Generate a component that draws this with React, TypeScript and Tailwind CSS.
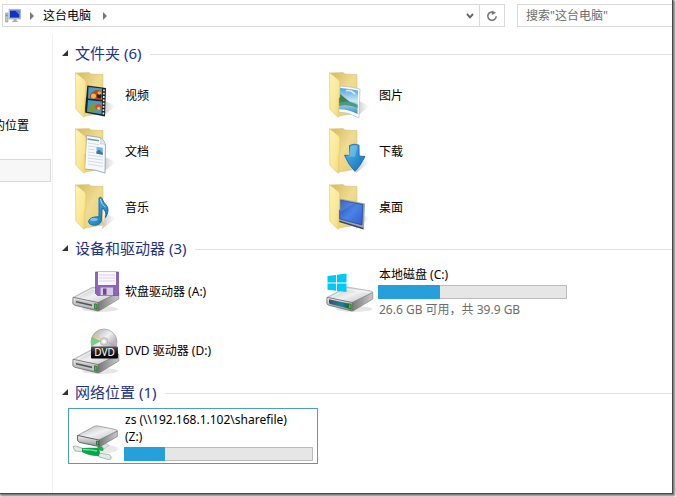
import React from 'react';

type IconName =
  | 'videos'
  | 'pictures'
  | 'documents'
  | 'downloads'
  | 'music'
  | 'desktop'
  | 'floppy'
  | 'system'
  | 'dvd'
  | 'network';

interface Entry {
  name: string;
  icon: IconName;
  used?: number;
  detail?: string;
  selected?: boolean;
}

interface GroupProps {
  title: string;
  entries: Entry[];
  rowClass: string;
  className?: string;
}

const folders: Entry[] = [
  { name: '视频', icon: 'videos' },
  { name: '图片', icon: 'pictures' },
  { name: '文档', icon: 'documents' },
  { name: '下载', icon: 'downloads' },
  { name: '音乐', icon: 'music' },
  { name: '桌面', icon: 'desktop' },
];

const drives: Entry[] = [
  { name: '软盘驱动器 (A:)', icon: 'floppy' },
  { name: '本地磁盘 (C:)', icon: 'system', used: 33, detail: '26.6 GB 可用，共 39.9 GB' },
  { name: 'DVD 驱动器 (D:)', icon: 'dvd' },
];

const network: Entry[] = [
  { name: 'zs (\\\\192.168.1.102\\sharefile) (Z:)', icon: 'network', used: 22, selected: true },
];

// Gradients shared by every icon on the page
const IconDefs = () => (
  <svg className="absolute size-0" aria-hidden="true">
    <defs>
      <linearGradient id="flap" x1="0" y1="0" x2="1" y2="1">
        <stop offset="0" stopColor="#fdf3b4" />
        <stop offset="0.6" stopColor="#fae896" />
        <stop offset="1" stopColor="#f3d468" />
      </linearGradient>
      <linearGradient id="back" x1="0" y1="0" x2="1" y2="1">
        <stop offset="0" stopColor="#d3b962" />
        <stop offset="0.5" stopColor="#efdb92" />
        <stop offset="1" stopColor="#e6cb72" />
      </linearGradient>
      <linearGradient id="shade" x1="0" y1="0" x2="1" y2="0">
        <stop offset="0" stopColor="#888" stopOpacity="0.5" />
        <stop offset="1" stopColor="#aaa" stopOpacity="0" />
      </linearGradient>
      <linearGradient id="blue" x1="0" y1="0" x2="1" y2="1">
        <stop offset="0" stopColor="#56bdf0" />
        <stop offset="1" stopColor="#0c6bb8" />
      </linearGradient>
      <linearGradient id="screen" x1="0" y1="0" x2="1" y2="1">
        <stop offset="0" stopColor="#1f49b4" />
        <stop offset="0.5" stopColor="#4a83e6" />
        <stop offset="1" stopColor="#2c5fd2" />
      </linearGradient>
      <linearGradient id="sky" x1="0" y1="0" x2="0" y2="1">
        <stop offset="0" stopColor="#4aa3dd" />
        <stop offset="0.5" stopColor="#c8e8f5" />
        <stop offset="1" stopColor="#2e8fb8" />
      </linearGradient>
      <linearGradient id="metal" x1="0" y1="0" x2="1" y2="1">
        <stop offset="0" stopColor="#b5b5b7" />
        <stop offset="0.5" stopColor="#f0f0f1" />
        <stop offset="1" stopColor="#b9b9bc" />
      </linearGradient>
      <linearGradient id="side" x1="0" y1="0" x2="1" y2="0">
        <stop offset="0" stopColor="#77777a" />
        <stop offset="1" stopColor="#c9c9cb" />
      </linearGradient>
      <linearGradient id="front" x1="0" y1="0" x2="0" y2="1">
        <stop offset="0" stopColor="#f4f4f5" />
        <stop offset="1" stopColor="#8d8d90" />
      </linearGradient>
      <linearGradient id="glow" x1="0" y1="0" x2="1" y2="0">
        <stop offset="0" stopColor="#38506a" />
        <stop offset="0.6" stopColor="#1a8299" />
        <stop offset="1" stopColor="#1b5b48" />
      </linearGradient>
      <linearGradient id="disc" x1="0" y1="0" x2="1" y2="1">
        <stop offset="0" stopColor="#9f9fa3" />
        <stop offset="0.45" stopColor="#f1f1f3" />
        <stop offset="0.7" stopColor="#b4b4b8" />
        <stop offset="1" stopColor="#dedee0" />
      </linearGradient>
      <linearGradient id="label" x1="0" y1="0" x2="0" y2="1">
        <stop offset="0" stopColor="#555" />
        <stop offset="0.5" stopColor="#1a1a1a" />
        <stop offset="1" stopColor="#000" />
      </linearGradient>
    </defs>
  </svg>
);

const Folder = ({ children }: { children: React.ReactNode }) => (
  <>
    <path d="M30 46 L44 35 L33 30 Z" fill="url(#shade)" />
    <path d="M4 2 L17 1.5 L19 3 L31 3.5 V42 L13 45 Z" fill="url(#back)" stroke="#dcc47a" strokeWidth="0.6" />
    {children}
    <path d="M3.5 1.5 L12.8 9 Q13.8 10 13.8 11 V26 L12.8 27.5 V45.5 Q12.5 46.8 11 45.6 L3.8 38 Z" fill="url(#flap)" stroke="#dfc468" strokeWidth="0.6" />
  </>
);

const DriveBody = ({ slot = '#55555a', lit = false }: { slot?: string; lit?: boolean }) => (
  <>
    <ellipse cx="28" cy="41" rx="18" ry="3" fill="#999" opacity="0.25" />
    <path d="M1 29.5 L19 20 Q20.5 19 22.5 19.3 L45 23 Q47 23.5 46.5 25 L26 35 Z" fill="url(#metal)" stroke="#9b9b9e" strokeWidth="0.6" />
    <path d="M26 34.5 L46.8 24.5 V31 L27 43 Q26 43.4 26 42 Z" fill="url(#side)" stroke="#77777a" strokeWidth="0.6" />
    <path d="M1 29.3 L26 34.5 V43 L3 37.3 Q0.8 36.6 0.8 35 Z" fill="url(#front)" stroke="#68686b" strokeWidth="0.8" />
    <path d="M3 31.3 L23.5 35.7 V40.7 L4 36 Q3 35.6 3 34.6 Z" fill={lit ? 'url(#glow)' : '#c5c5c8'} />
    {!lit && <path d="M4 33 L20 36.5 V38.2 L4 34.6 Z" fill={slot} />}
    <path d="M22.6 35.8 L25 36.3 V41.2 L22.6 40.6 Z" fill="#3fc63c" stroke="#23652a" strokeWidth="0.8" />
    <path d="M6 28.7 L20.5 21 L43 24.6" fill="none" stroke="#fff" strokeWidth="0.8" opacity="0.8" />
  </>
);

const drawings: Record<IconName, React.ReactNode> = {
  videos: (
    <Folder>
      <path d="M15.3 14.5 L34 17 L33 45.5 L12.5 41.5 Z" fill="#1d2224" />
      <path d="M16.5 16 L30 17.6 V28.8 L16 27.5 Z" fill="#469ec5" />
      <path d="M16 29 L30 30.5 L29.5 43.3 L15 40.7 Z" fill="#459bc0" />
      <path d="M18 24 Q23 17 29 20 V28.5 L18 27 Z" fill="#b9442a" />
      <circle cx="21.5" cy="25" r="2.5" fill="#edbd38" />
      <circle cx="27.3" cy="25" r="2.4" fill="#18252f" />
      <circle cx="27.3" cy="22" r="1.8" fill="#e9b52f" />
      <path d="M17 38 Q19 31 23 33 L25 41.5 L16 40.5 Z" fill="#7a9742" />
      <circle cx="26.5" cy="36" r="3.1" fill="#d44834" />
      <circle cx="26.7" cy="37.3" r="1.6" fill="#f1cd43" />
      <path d="M32 18.5 L31.3 44.5" stroke="#e8eeee" strokeWidth="1.6" strokeDasharray="1.8 1.5" />
    </Folder>
  ),
  pictures: (
    <Folder>
      <path d="M14 15 Q24 15.5 34 18 L33 47 Q23 41 12.5 41 Z" fill="#fafafa" stroke="#b9bec3" strokeWidth="0.7" />
      <path d="M14 17 Q24 17.5 32 19.5 L31.5 43 Q23 38.5 13 38.3 Z" fill="url(#sky)" />
      <path d="M13 22 L19 27 L24 31 L13 32 Z" fill="#3f8054" />
      <path d="M13 32 Q23 28 31.7 34 L31.5 37 Q23 33 13 35 Z" fill="#4b9a84" />
      <path d="M20 20 Q24 18 29 23" fill="none" stroke="#fff" strokeWidth="1.8" opacity="0.7" />
    </Folder>
  ),
  documents: (
    <Folder>
      <path d="M14.5 8.5 L28 10.5 Q32.5 13 33.5 18 L33 46 Q24 42.5 12.5 42 Z" fill="#f6f8fc" stroke="#929bac" strokeWidth="0.8" />
      <path d="M28 10.5 Q29.5 14 28.5 17 Q31.5 16.5 33.5 18 Q32.5 13 28 10.5 Z" fill="#e2e8f2" stroke="#abb3c1" strokeWidth="0.5" />
      <path d="M15.5 12 L27 13.8" stroke="#68a2a9" strokeWidth="1.6" />
      <path d="M16 16 L27 17.6 M16 19 L31 21 M16 22 L23 23 M16 25 L23 26 M16 28 L31 30 M16 31 L31 33 M16 34 L31 36.2 M16 37 L31 39.5" stroke="#ccd2dd" strokeWidth="0.8" />
      <path d="M24.5 20 L30.8 21 V27.8 L24.5 26.8 Z" fill="#6fb4e0" />
      <path d="M24.5 24.5 L27 22.8 L30.8 26 V27.8 L24.5 26.8 Z" fill="#3e7791" />
    </Folder>
  ),
  downloads: (
    <Folder>
      <path d="M23.5 18.5 Q28 16 33 18.2 L33.2 29 L39 29.5 Q35 38 29 44.5 Q22.5 38 18.5 28.2 L23.5 28.5 Z" fill="url(#blue)" stroke="#1465a8" strokeWidth="0.8" />
      <path d="M24.5 19.5 Q28 17.6 31.5 18.7 L29 30 L22 29.5" fill="#a0dcf7" opacity="0.4" />
    </Folder>
  ),
  music: (
    <Folder>
      <path d="M27 15 Q29 13.5 30 15.5 Q31 19 34.5 22.5 Q38 27 33.5 34.5 Q35.2 28 30 25 L29.3 38 Q28.5 42 22.5 42.3 Q17 42 16.5 38.5 Q17.5 33.5 27 33.8 Z" fill="url(#blue)" stroke="#1465a8" strokeWidth="0.9" />
      <ellipse cx="22" cy="36.5" rx="3.8" ry="1.7" fill="#a7e0f8" opacity="0.6" />
      <path d="M28.3 16 Q29 21 33.7 24.5" fill="none" stroke="#a7e0f8" strokeWidth="0.9" />
    </Folder>
  ),
  desktop: (
    <Folder>
      <path d="M13.5 35 L38 42.5 L37.5 46.5 L13 39 Z" fill="#3b4554" />
      <path d="M13.5 15.5 L39 20.5 L38 45 L13 37.5 Z" fill="#97a5b8" />
      <path d="M13.5 17 L36.8 21.6 L36 42 L13.5 35.8 Z" fill="url(#screen)" stroke="#1c326d" strokeWidth="0.6" />
      <path d="M14 17 L29 20 L14 29 Z" fill="#fff" opacity="0.13" />
    </Folder>
  ),
  floppy: (
    <>
      <DriveBody />
      <path d="M23.5 4 H46.5 V27.5 H25.5 L23.5 25.5 Z" fill="#8e63b8" stroke="#6d4a94" strokeWidth="0.7" />
      <path d="M26 4 H44 V17 H26 Z" fill="#f8f7fb" />
      <path d="M27 7 H43 M27 10 H43 M27 13 H43" stroke="#d3c9df" strokeWidth="0.8" />
      <path d="M28.5 19.5 H41 V27.3 H28.5 Z" fill="#d5cce1" />
      <path d="M31 20.5 H34.5 V26.8 H31 Z" fill="#72498f" />
    </>
  ),
  system: (
    <>
      <DriveBody lit />
      <path d="M1.5 8 L10 7 V14.6 H1.5 Z M11 6.8 L20.5 5.5 V14.6 H11 Z M1.5 15.6 H10 V22.8 L1.5 21.8 Z M11 15.6 H20.5 V24 L11 22.9 Z" fill="#00c8fa" />
    </>
  ),
  dvd: (
    <>
      <g transform="translate(0 3)">
        <DriveBody />
      </g>
      <circle cx="32" cy="15" r="13" fill="url(#disc)" stroke="#9d9da1" strokeWidth="0.7" />
      <path d="M20 10 L29 14 L20 19 Q18.5 14.5 20 10 Z" fill="#63ca6b" opacity="0.8" />
      <path d="M20.3 9.5 L24 5 L30 12.5 Z" fill="#e6bf60" opacity="0.4" />
      <path d="M35 15 L45 18 L43 20 Z" fill="#ce8fc8" opacity="0.7" />
      <circle cx="32" cy="14.5" r="3.8" fill="#d8d8da" stroke="#a7a7aa" strokeWidth="0.7" />
      <circle cx="32" cy="14.5" r="1.7" fill="#fff" />
      <rect x="19" y="19.5" width="27" height="12" rx="1" fill="url(#label)" />
      <text x="32.5" y="29.3" textAnchor="middle" fill="#fff" fontSize="10" fontFamily="Noto Sans, sans-serif">
        DVD
      </text>
    </>
  ),
  network: (
    <>
      <ellipse cx="34" cy="37" rx="12" ry="4" fill="#aaa" opacity="0.25" />
      <path d="M24 38 L27 33 L33 33.5 L31 39 Z" fill="#27a653" />
      <path d="M29 33.5 L35 31.5 L37 33.5 L32 37 Z" fill="#d4e4de" stroke="#a6b8b3" strokeWidth="0.6" />
      <path d="M1 34.5 L4 34 L11 36.5 L12 40 L3 39 Z" fill="#dce9e5" stroke="#8fa29c" strokeWidth="0.7" />
      <path d="M26 41 L37 42.5 Q40 43.5 39 47 L36 47.5 L26 44.5 Z" fill="#e1ece9" stroke="#8fa29c" strokeWidth="0.7" />
      <path d="M10 36 Q18 35.5 26 36 L28 40 L27 44 Q18 44.5 10 40 Z" fill="#0ca44b" />
      <path d="M11 37.5 Q18 37.5 25 39" stroke="#6ce596" strokeWidth="1.4" fill="none" />
      <path d="M5.5 23.5 L22 14.5 Q24 13.5 26 14 L43.5 17.5 Q46 18 45 20 L27 28.5 Z" fill="url(#metal)" stroke="#858588" strokeWidth="0.7" />
      <path d="M27 28 L45.3 19 V24.5 L28 34.5 Q27 35 27 33.5 Z" fill="url(#side)" stroke="#77777a" strokeWidth="0.7" />
      <path d="M5.5 23.5 L27 28 V34.5 L8 30.5 Q5.5 29.5 5.5 28 Z" fill="url(#front)" stroke="#5b5b5e" strokeWidth="0.9" />
      <path d="M24.5 29 L26.6 29.5 V33 L24.5 32.5 Z" fill="#3fc63c" stroke="#23652a" strokeWidth="0.8" />
    </>
  ),
};

const UsageBar = ({ label, used }: { label: string; used: number }) => (
  <div
    role="progressbar"
    aria-label={label}
    aria-valuenow={used}
    className="h-3.5 w-full border border-[#bcbcbc] bg-[#e6e6e6]"
  >
    <div className="-my-px -ml-px h-3.5 bg-[#26a0da]" style={{ width: `${used}%` }} />
  </div>
);

const EntryItem = ({ entry, rowClass }: { entry: Entry; rowClass: string }) => (
  <li className={`flex items-center ${rowClass}`}>
    <a
      href="#"
      className={`flex h-14 w-full items-center gap-1 border pr-1 pl-[3px] text-black ${
        entry.selected ? 'border-[#4a9bd6]' : 'border-transparent'
      }`}
    >
      <svg viewBox="0 0 48 48" className="size-12 shrink-0" aria-hidden="true">
        {drawings[entry.icon]}
      </svg>
      <div className="flex min-w-0 flex-1 flex-col gap-0.5">
        <span className="pr-3 pl-px">{entry.name}</span>
        {entry.used !== undefined && <UsageBar label={entry.name} used={entry.used} />}
        {entry.detail && <span className="pl-px text-[#6d6d6d]">{entry.detail}</span>}
      </div>
    </a>
  </li>
);

const Group = ({ title, entries, rowClass, className = '' }: GroupProps) => (
  <section className={className}>
    <h2 className="flex h-[26px] items-center gap-2 pl-[9px]">
      <button type="button" className="flex items-center gap-[7px] pb-0.5 text-[15px] leading-5 text-[#1e3287]">
        <svg viewBox="0 0 6 6" className="size-1.5" aria-hidden="true">
          <path d="M6 0 V6 H0 Z" fill="#333" />
        </svg>
        {title} ({entries.length})
      </button>
      <span className="h-px flex-1 bg-[#e2e2e2]" />
    </h2>
    <ul className="grid grid-cols-[repeat(auto-fill,250px)] gap-x-1 pl-[15px]">
      {entries.map((entry) => (
        <EntryItem key={entry.name} entry={entry} rowClass={rowClass} />
      ))}
    </ul>
  </section>
);

const Arrow = () => (
  <svg viewBox="0 0 4 8" className="h-2 w-1" aria-hidden="true">
    <path d="M0 0 L4 4 L0 8 Z" fill="#777" />
  </svg>
);

const Toolbar = () => (
  <header className="flex h-[35px] items-start gap-3 pt-1 pl-0.5">
    <nav className="flex h-[23px] flex-1 items-center border border-[#d9d9d9] pl-0.5">
      <svg viewBox="0 0 16 16" className="size-4" aria-hidden="true">
        <path d="M0.5 5 H3 V14 H0.5 Z" fill="#c3c8cc" stroke="#8b9298" strokeWidth="0.6" />
        <path d="M1 7.5 H2.5" stroke="#4ca64a" strokeWidth="1.5" />
        <path d="M4 1.5 H15.5 V11 H4 Z" fill="#c5ccd3" stroke="#8d959e" strokeWidth="0.6" />
        <path d="M5 2.5 H14.5 V9.7 H5 Z" fill="#1233bd" />
        <path d="M10 2.5 H14.5 V7 Z" fill="#4f82f0" />
        <path d="M8.5 11 H11.5 V12.5 L13.5 14 H6.5 L8.5 12.5 Z" fill="#a8afb5" />
      </svg>
      <button type="button" aria-label="展开" className="flex h-full items-center px-[9px]">
        <Arrow />
      </button>
      <button type="button" className="h-full">
        这台电脑
      </button>
      <button type="button" aria-label="展开" className="flex h-full items-center px-3">
        <Arrow />
      </button>
      <button type="button" aria-label="历史记录" className="ml-auto flex h-full w-[18px] items-center justify-center">
        <svg viewBox="0 0 8 6" className="h-1.5 w-2" aria-hidden="true">
          <path d="M1 1 L4 4.3 L7 1" fill="none" stroke="#666" strokeWidth="1.9" />
        </svg>
      </button>
      <button
        type="button"
        aria-label="刷新"
        className="flex h-full w-[25px] items-center justify-center border-l border-[#d9d9d9]"
      >
        <svg viewBox="0 0 12 12" className="size-3" aria-hidden="true">
          <path d="M8.2 2.6 A4.2 4.2 0 1 0 10.2 6.2" fill="none" stroke="#777" strokeWidth="1.6" />
          <path d="M6 0.3 H10.2 V4.6 H6 Z" fill="#fff" />
          <path d="M5.8 0.5 V5 L10 2.8 Z" fill="#777" />
        </svg>
      </button>
    </nav>
    <input
      type="search"
      aria-label="搜索"
      placeholder={'搜索"这台电脑"'}
      className="h-[23px] w-[155px] border border-r-0 border-[#d9d9d9] px-2 text-[#6d6d6d] outline-none placeholder:text-[#6d6d6d]"
    />
  </header>
);

const App = () => {
  return (
    <div className="flex min-h-screen bg-white pr-[3px] pb-[3px] font-['Noto_Sans','Noto_Sans_CJK_SC',sans-serif] text-[12px] leading-[17px] text-black">
      <IconDefs />
      <div className="flex min-w-0 flex-1 flex-col border-r border-b border-[#484848] bg-white shadow-[1px_1px_2px_1px_#777]">
        <Toolbar />
        <div className="flex flex-1">
          <aside className="w-[52px] shrink-0 pt-20">
            <a href="#" className="flex h-5 w-[29px] items-center justify-end overflow-hidden whitespace-nowrap">
              的位置
            </a>
            <a
              href="#"
              aria-label="这台电脑"
              className="mt-6 mr-px block h-[23px] border border-l-0 border-[#dadada] bg-[#f7f7f7]"
            />
          </aside>
          <main className="min-w-0 flex-1 border-l border-[#f0f0f0] pt-1.5">
            <Group title="文件夹" entries={folders} rowClass="h-14" />
            <Group title="设备和驱动器" entries={drives} rowClass="h-[59px]" className="mt-px" />
            <Group title="网络位置" entries={network} rowClass="h-15" />
          </main>
        </div>
      </div>
    </div>
  );
};

export default App;
